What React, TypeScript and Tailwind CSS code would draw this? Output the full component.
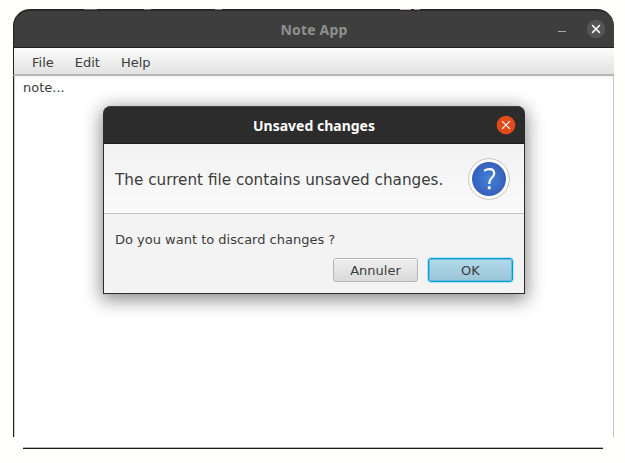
const body = "font-['DejaVu_Sans',sans-serif]";
const title = "font-['Noto_Sans','Open_Sans',sans-serif] font-bold";

function TitleBar() {
  return (
    <header className="relative flex h-[39px] shrink-0 items-center justify-center rounded-t-[17px] border-t-2 border-b border-l border-t-[#2b2728] border-b-[#231f20] border-l-[#231f20] bg-[#3e3e3e]">
      <div className="absolute -top-[2px] left-[70px] h-px w-[13px] bg-[#706769]" />
      <div className="absolute -top-[2px] left-[130px] h-px w-[7px] bg-[#7d7577]" />
      <div className="absolute -top-[2px] left-[201px] h-px w-[7px] bg-[#8b8284]" />
      <div className="absolute -top-[2px] left-[386px] h-px w-[11px] bg-[#c4b5b2]" />
      <div className="absolute -top-[2px] left-[400px] h-px w-[6px] bg-[#a99c9b]" />
      <h1 className={`${title} pt-[2px] text-[14px] leading-5 tracking-[0.2px] text-[#8f908e]`}>Note App</h1>
      <div className="absolute top-[8px] right-[8px] flex items-center gap-[20px]">
        <button aria-label="Minimize" className="mt-[5px] h-px w-2 bg-[#a9a9a9]" />
        <button aria-label="Close">
          <CloseIcon fill="#555555" stroke="#f5f5f5" width={1.5} />
        </button>
      </div>
    </header>
  );
}

function CloseIcon({ fill, stroke, width }: { fill: string; stroke: string; width: number }) {
  return (
    <svg className="block" width="20" height="20" viewBox="0 0 20 20" fill="none">
      <circle cx="10" cy="10" r="9.3" fill={fill} />
      <path d="M6.1 6.1 13.9 13.9M13.9 6.1 6.1 13.9" stroke={stroke} strokeWidth={width} />
    </svg>
  );
}

function QuestionIcon() {
  return (
    <svg width="42" height="42" viewBox="0 0 42 42" fill="none">
      <defs>
        <radialGradient id="blue">
          <stop offset="0" stopColor="#4584d8" />
          <stop offset="1" stopColor="#355fbb" />
        </radialGradient>
      </defs>
      <circle cx="21" cy="21" r="20.4" fill="#fff" stroke="#c4c4c4" strokeWidth="1" />
      <circle cx="21" cy="21" r="17" fill="url(#blue)" />
      <path d="M16.2 12.8C17.8 11.7 19.6 11.2 21.3 11.2C24.4 11.2 26.2 12.8 26.2 15.4C26.2 17.4 25.2 18.5 23.6 20C21.8 21.7 21.2 22.6 21.2 26" stroke="#fff" strokeWidth="2.2" />
      <path d="M19.8 28.3h2.8v2.9h-2.8z" fill="#fff" />
    </svg>
  );
}

function Dialog() {
  return (
    <section className="absolute top-[106px] left-[103px] flex h-[188px] w-[422px] flex-col rounded-t-[8px] bg-[#2c2c2c] shadow-[0_4px_18px_2px_rgba(0,0,0,0.45)]">
      <div className="relative flex h-[38px] shrink-0 items-center justify-center rounded-t-[8px] border-t border-b border-t-[#424242] border-b-[#1d1d1d]">
        <h2 className={`${title} pt-[2px] text-[14px] leading-5 text-white`}>Unsaved changes</h2>
        <button aria-label="Close dialog" className="absolute top-[8px] right-[9px]">
          <CloseIcon fill="#e04b18" stroke="#fff" width={1.2} />
        </button>
      </div>
      <div className="mx-px mb-px flex grow flex-col bg-[#f3f3f3]">
        <div className="flex h-[70px] items-center justify-between border-b border-[#c2c2c2] bg-linear-to-b from-[#f2f2f2] to-[#fafafa] pr-[14px] pl-[11px]">
          <p className="pt-[2px] text-[15.22px] leading-5 whitespace-nowrap">The current file contains unsaved changes.</p>
          <QuestionIcon />
        </div>
        <p className="mt-[17px] pl-[11px] text-[13px] leading-[18px]">Do you want to discard changes ?</p>
        <div className="mt-[9px] flex justify-end gap-[10px] pr-[11px] text-[13px]">
          <button className="h-[24px] w-[85px] rounded-[3px] border border-[#b5b5b5] bg-linear-to-b from-[#efefef] to-[#dadada] pt-[2px] shadow-[inset_0_1px_0_#fafafa]">
            Annuler
          </button>
          <button className="h-[24px] w-[85px] rounded-[3px] border border-[#039ed3] bg-linear-to-b from-[#b1daec] to-[#9bc4d7] pt-[2px] shadow-[0_0_0_1px_#b6e3f2,inset_0_0_0_1px_#6bbcd9]">
            OK
          </button>
        </div>
      </div>
    </section>
  );
}

export default function App() {
  return (
    <main className={`${body} relative h-[463px] w-[625px] overflow-hidden bg-[#fffffc] pt-[9px] pl-[13px] text-[13px] text-[#3c3c3c]`}>
      <div className="flex h-[440px] w-[601px] flex-col">
        <TitleBar />
        <nav className="flex h-[28px] shrink-0 items-center gap-[21px] border-b-2 border-l border-b-[#b7b7b7] border-l-[#231f20] bg-linear-to-b from-[#fbfbfb] to-[#e2e2e2] pt-[3px] pl-[18px] leading-[18px]">
          <span>File</span>
          <span>Edit</span>
          <span>Help</span>
        </nav>
        <div className="flex grow">
          <div className="mb-[10px] w-[2px] border-r border-l border-l-[#1c1c1c] border-r-[#cfcfcf]" />
          <div className="grow bg-linear-to-b from-[#f4f4f4] to-white to-[4px] pt-[3px] pl-2 leading-[18px]">note...</div>
          <div className="mb-[10px] w-px bg-[#c6c6ca]" />
        </div>
        <div className="mr-[11px] ml-[10px] h-[2px] shrink-0 border-t border-b border-t-[#bababa] border-b-[#1c1c1c]" />
      </div>
      <Dialog />
    </main>
  );
}
